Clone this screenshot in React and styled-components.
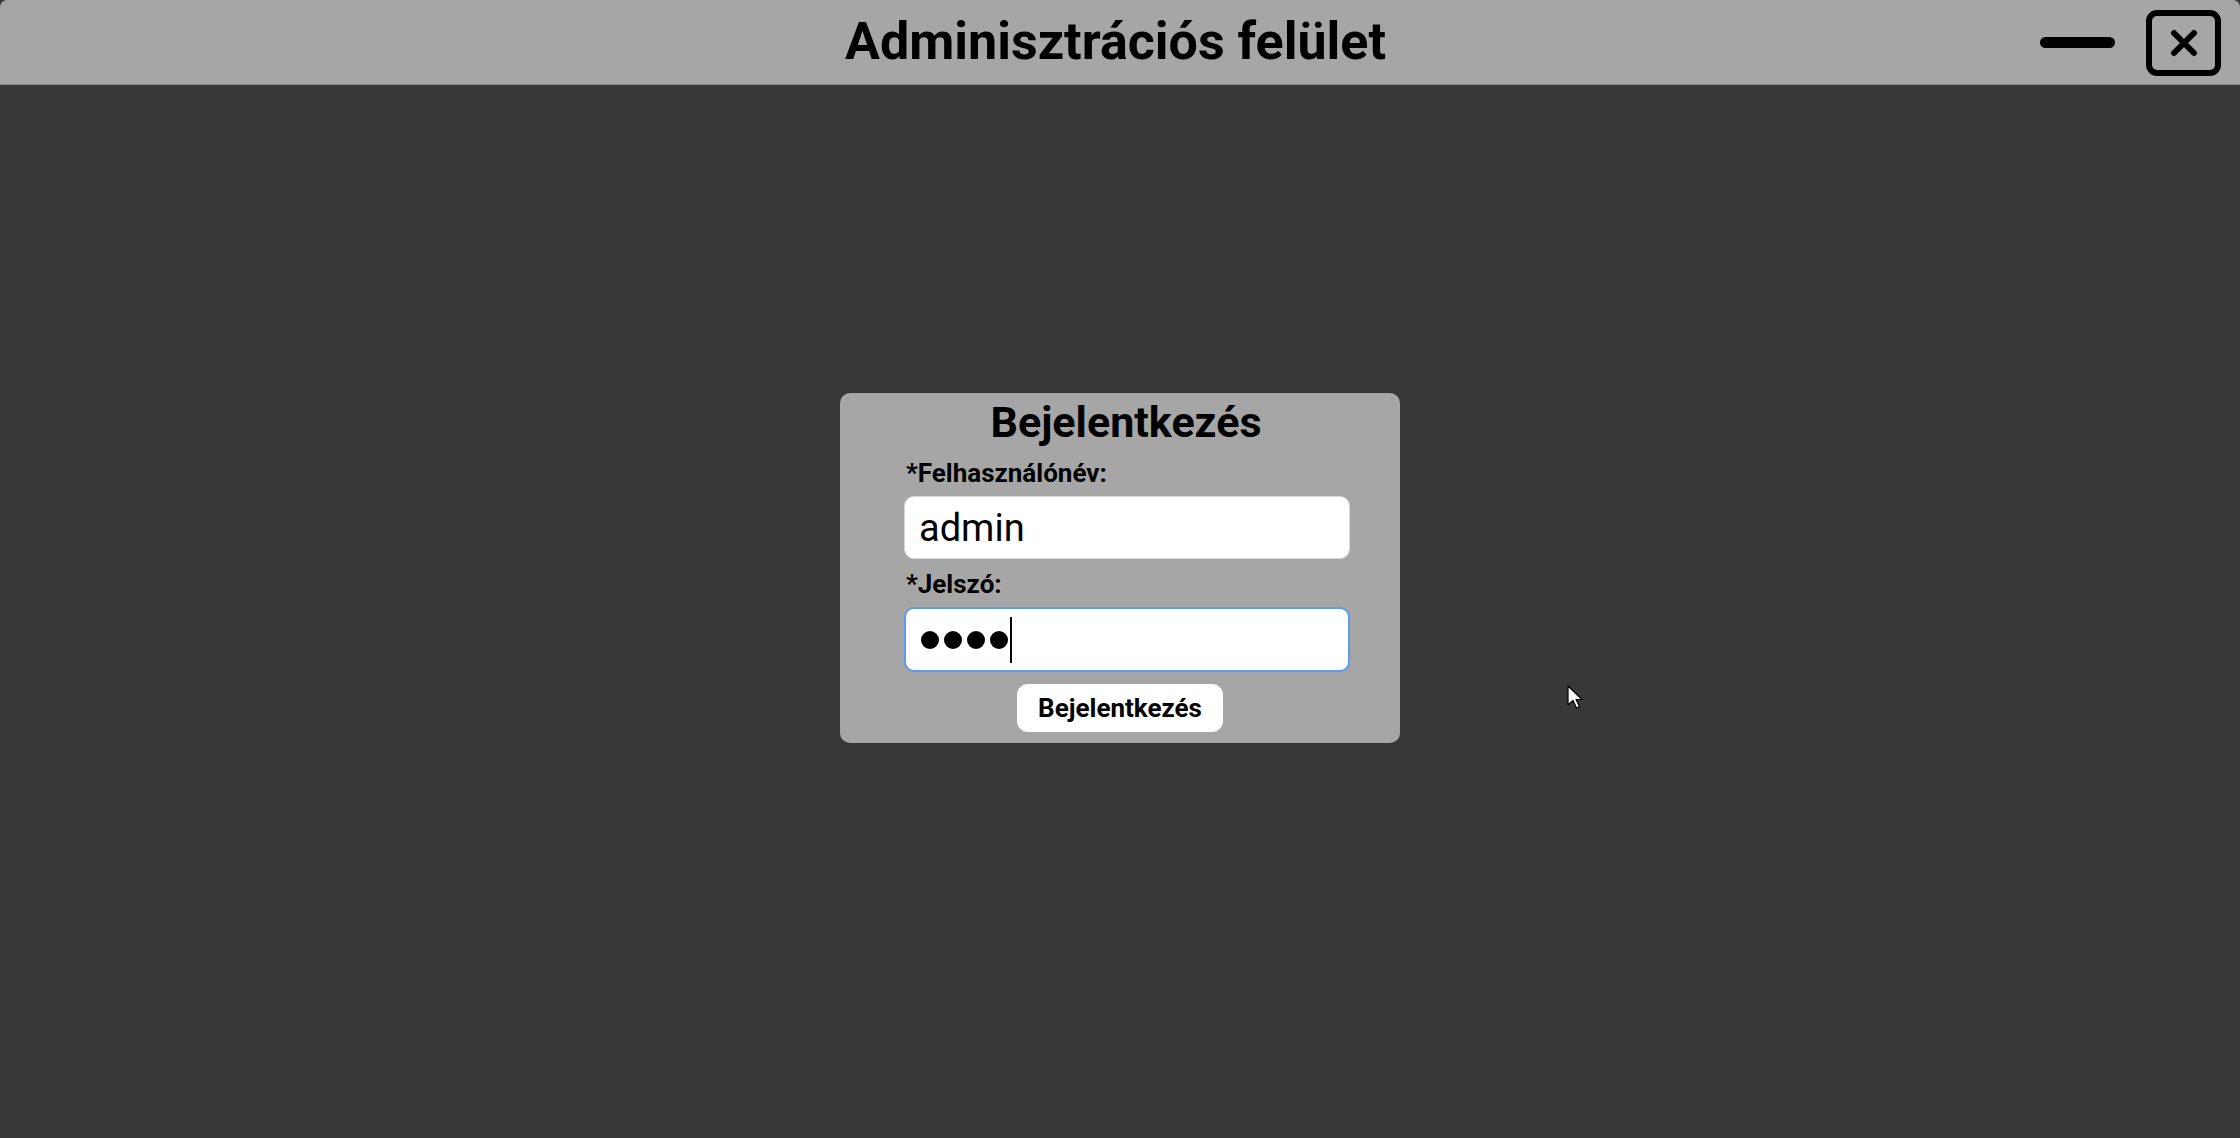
import React from "react";
import styled, { createGlobalStyle } from "styled-components";

const Global = createGlobalStyle`
  html, body { margin: 0; padding: 0; background: #383838; }
  body { font-family: Roboto, "Liberation Sans", sans-serif; }
  * { box-sizing: border-box; }
`;

const Page = styled.div`
  position: relative;
  width: 2240px;
  height: 1138px;
  background: #383838;
  display: flex;
  flex-direction: column;
  overflow: hidden;
`;

const TitleBar = styled.header`
  height: 85px;
  flex: none;
  background: #a6a6a6;
  border-radius: 7px 7px 0 0;
  border-bottom: 1px solid #8e8e8e;
  display: grid;
  grid-template-columns: 1fr auto 1fr;
  align-items: center;
  padding: 0 19px 0 0;
`;

const Title = styled.h1`
  grid-column: 2;
  margin: 0 0 0 10px;
  font-size: 52px;
  font-weight: 700;
  color: #000;
  line-height: 1;
`;

const Controls = styled.div`
  grid-column: 3;
  justify-self: end;
  display: flex;
  align-items: center;
  gap: 31px;
`;

const Minimize = styled.button`
  width: 75px;
  height: 11px;
  border: none;
  border-radius: 6px;
  background: #000;
  padding: 0;
  margin-top: 1px;
`;

const Close = styled.button`
  width: 75px;
  height: 66px;
  border: 6px solid #000;
  border-radius: 11px;
  background: transparent;
  display: flex;
  align-items: center;
  justify-content: center;
  padding: 0;
  margin-top: 1px;
`;

const Body = styled.main`
  flex: 1;
  display: flex;
  justify-content: center;
  align-items: flex-start;
  padding-top: 308px;
`;

const Card = styled.form`
  width: 560px;
  height: 350px;
  background: #a6a6a6;
  border-radius: 10px;
  display: flex;
  flex-direction: column;
  align-items: center;
  padding-top: 3px;
`;

const CardTitle = styled.h2`
  margin: 0 0 0 12px;
  font-size: 43px;
  font-weight: 700;
  line-height: 52px;
  color: #000;
`;

const Fields = styled.div`
  width: 446px;
  margin-left: 14px;
  display: flex;
  flex-direction: column;
`;

const Label = styled.label`
  font-size: 26px;
  font-weight: 700;
  color: #000;
  line-height: 30px;
  padding-left: 2px;
  margin-top: ${(p) => p.$top}px;
  margin-bottom: 8px;
`;

const TextInput = styled.input`
  width: 446px;
  height: 63px;
  border: 1px solid #d8d8d8;
  border-radius: 10px;
  background: #fff;
  font-family: Roboto, "Liberation Sans", sans-serif;
  font-size: 38px;
  color: #000;
  padding: 0 14px;
  outline: none;
`;

const PasswordBox = styled.div`
  width: 446px;
  height: 65px;
  border: 2px solid #5b9cf0;
  border-radius: 10px;
  background: #fff;
  display: flex;
  align-items: center;
  padding: 0 15px;
  gap: 5px;
`;

const Dot = styled.span`
  width: 18px;
  height: 18px;
  border-radius: 50%;
  background: #000;
  flex: none;
`;

const Caret = styled.span`
  width: 2px;
  height: 46px;
  background: #000;
  margin-left: -3px;
  margin-top: 1px;
`;

const Submit = styled.button`
  margin-top: 12px;
  width: 206px;
  height: 48px;
  border: none;
  border-radius: 11px;
  background: #fff;
  font-family: Roboto, "Liberation Sans", sans-serif;
  font-size: 26px;
  font-weight: 700;
  color: #000;
  padding: 0;
`;

const Pointer = styled.svg`
  position: absolute;
  left: 1567px;
  top: 685px;
`;

export default function App() {
  return (
    <Page>
      <Global />
      <TitleBar>
        <Title>Adminisztrációs felület</Title>
        <Controls>
          <Minimize aria-label="Kis méret" />
          <Close aria-label="Bezárás">
            <svg width="36" height="30" viewBox="0 0 36 30">
              <path d="M8 5 L28 25 M28 5 L8 25" stroke="#000" strokeWidth="6" strokeLinecap="round" />
            </svg>
          </Close>
        </Controls>
      </TitleBar>
      <Body>
        <Card onSubmit={(e) => e.preventDefault()}>
          <CardTitle>Bejelentkezés</CardTitle>
          <Fields>
            <Label $top={10}>*Felhasználónév:</Label>
            <TextInput defaultValue="admin" />
            <Label $top={10}>*Jelszó:</Label>
            <PasswordBox>
              <Dot />
              <Dot />
              <Dot />
              <Dot />
              <Caret />
            </PasswordBox>
          </Fields>
          <Submit type="submit">Bejelentkezés</Submit>
        </Card>
      </Body>
      <Pointer width="20" height="26" viewBox="0 0 20 26">
        <path d="M1 1 L1 20 L6 15.5 L9.5 23 L12.5 21.6 L9 14.5 L15 14.5 Z" fill="#fff" stroke="#000" strokeWidth="1.2" strokeLinejoin="round" />
      </Pointer>
    </Page>
  );
}
